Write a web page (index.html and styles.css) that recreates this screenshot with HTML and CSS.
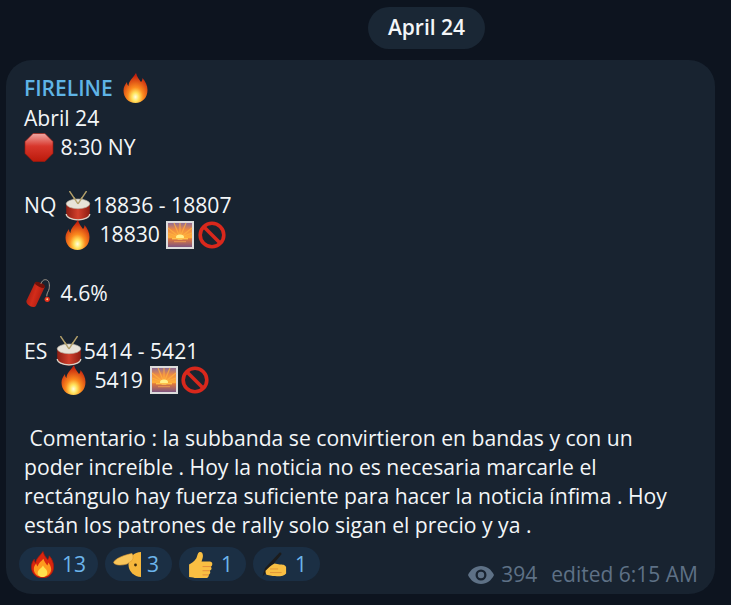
FILE: index.html
```html
<!DOCTYPE html>
<html lang="es">
<head>
<meta charset="utf-8">
<title>FIRELINE</title>
<link rel="stylesheet" href="styles.css">
</head>
<body>
<svg class="defs" width="0" height="0" aria-hidden="true">
  <defs>
    <radialGradient id="flameOuter" cx="50%" cy="80%" r="72%">
      <stop offset="0" stop-color="#fffde0"/>
      <stop offset=".2" stop-color="#ffe45e"/>
      <stop offset=".45" stop-color="#fb8a1e"/>
      <stop offset="1" stop-color="#c41f0e"/>
    </radialGradient>
    <linearGradient id="stopFill" x1="0" y1="0" x2="0" y2="1">
      <stop offset="0" stop-color="#f0a8a4"/>
      <stop offset=".45" stop-color="#d8372c"/>
      <stop offset="1" stop-color="#bb1a0b"/>
    </linearGradient>
    <linearGradient id="drumBody" x1="0" y1="0" x2="1" y2="0">
      <stop offset="0" stop-color="#8e1d12"/>
      <stop offset=".5" stop-color="#d2402c"/>
      <stop offset="1" stop-color="#8e1d12"/>
    </linearGradient>
    <linearGradient id="sky" x1="0" y1="0" x2="0" y2="1">
      <stop offset="0" stop-color="#8f6c96"/>
      <stop offset=".28" stop-color="#ee8a42"/>
      <stop offset=".6" stop-color="#ffae38"/>
      <stop offset=".66" stop-color="#e0783c"/>
      <stop offset="1" stop-color="#7e5580"/>
    </linearGradient>
    <linearGradient id="stick" x1="0" y1="0" x2="1" y2=".45">
      <stop offset="0" stop-color="#8f150c"/>
      <stop offset=".55" stop-color="#d42c1a"/>
      <stop offset="1" stop-color="#a81a10"/>
    </linearGradient>
    <symbol id="fire" viewBox="0 0 24 30">
      <path fill="url(#flameOuter)" d="M12.500 0c1 4 3 6 5 9 1-1 1.500-2.500 1.500-4 3 3.500 5 7.500 5 12 0 7.500-5 13-12 13S0 24.500 0 17.500c0-3.500 1.500-6 3.500-8.500 0 2 .5 3 1.500 4C5 8 9.500 5 12.500 0z"/>
    </symbol>
    <symbol id="fire-flat" viewBox="0 0 24 28">
      <path fill="#d8260f" stroke="#a81a0a" stroke-width=".8" d="M12.500.5c1 4 3 6 5 8.500 1-1 1.500-2.500 1.500-4 3 3.500 4.500 7 4.500 11.500 0 6.500-5 11.500-11.500 11.500S.5 23 .5 16.500c0-3.500 1.500-6 3-8 0 2 .5 3 1.500 4C5 8 9.500 5 12.500.5z"/>
      <path fill="#ff9a1e" d="M13 8c1 3 2 4.500 4 7 .5-1 1-2 1-3 2 2.500 3 5 3 7 0 4.500-4 8-9 8s-9-3.500-9-8c0-2.500 1-4.500 2.500-6 .3 1.500.8 2 1.500 3C8 12 11 10.500 13 8z"/>
      <path fill="#ffe14d" d="M12.500 15c1 2.500 4.500 4 4.500 7.500 0 2.500-2.200 4.500-5 4.500s-5-2-5-4.500c0-3 4-4.500 5.500-7.500z"/>
    </symbol>
    <symbol id="stop" viewBox="0 0 28 28">
      <path fill="url(#stopFill)" stroke="#a5180c" stroke-width=".6" d="M8.300.5h11.400l7.800 7.800v11.400l-7.800 7.800H8.300L.5 19.700V8.300z"/>
    </symbol>
    <symbol id="drum" viewBox="0 0 24 28">
      <path stroke="#b3a06a" stroke-width="1.300" fill="none" d="M4 0l8 12M20 0l-8 12"/>
      <path fill="url(#drumBody)" d="M1 12v10c0 3 5 5.500 11 5.500S23 25 23 22V12z"/>
      <path fill="none" stroke="#d9d4c8" stroke-width="1.200" d="M1 21.500c0 3 5 5.500 11 5.500s11-2.500 11-5.500"/>
      <ellipse cx="12" cy="12" rx="11" ry="4.500" fill="#e8e3d8" stroke="#b8b2a4" stroke-width=".6"/>
      <path stroke="#b3a06a" stroke-width="1.300" fill="none" d="M8 6l4 6M16 6l-4 6"/>
    </symbol>
    <symbol id="sunrise" viewBox="0 0 28 28">
      <rect width="28" height="28" fill="#dcdcdc"/>
      <rect x="2" y="2" width="24" height="24" fill="url(#sky)"/>
      <path stroke="#ffb040" stroke-width="1.200" opacity=".8" d="M14 16.500L2 7M14 16.500L8 2M14 16.500V2M14 16.500L20 2M14 16.500L26 7M14 16.500L2 12M14 16.500L26 12"/>
      <ellipse cx="14" cy="16" rx="4" ry="2.600" fill="#fff08a"/>
      <rect x="6" y="17" width="16" height="1.400" fill="#ffc04a"/>
      <rect x="8" y="20" width="12" height="1.200" fill="#f0a050" opacity=".7"/>
    </symbol>
    <symbol id="prohibit" viewBox="0 0 28 28">
      <circle cx="14" cy="14" r="11.800" fill="#1a2530" stroke="#d9281c" stroke-width="3.600"/>
      <path stroke="#d9281c" stroke-width="3.600" d="M6 6l16 16"/>
    </symbol>
    <symbol id="dynamite" viewBox="0 0 30 30">
      <path fill="url(#stick)" d="M11 3.600L21 8.400 12 27.400c-1 2-4 1.800-6 .8s-4.500-3-4-5.600z"/>
      <ellipse cx="16" cy="6" rx="5.600" ry="2.200" transform="rotate(25 16 6)" fill="#6f1109"/>
      <path fill="none" stroke="#a89e90" stroke-width="1" d="M17 5c1-3 3-5 6-4s3 6 2.500 9-2.500 4-2.500 8"/>
      <circle cx="23.500" cy="21" r="2.700" fill="#e6301d"/>
      <circle cx="23.500" cy="21" r="1" fill="#ffd98a"/>
    </symbol>
    <symbol id="point" viewBox="0 0 28 25">
      <path fill="#f6b73c" d="M28 0a12.500 12.500 0 0 0 0 25z"/>
      <path fill="#f8c55a" stroke="#dd9a33" stroke-width=".6" d="M1 9.500C5 5 12 3 19 1.500c1.500 2 1.500 5 0 7l-5 3.500c-5 1.500-10 1.500-12.500-.3-1-.6-1-1.500-.5-2.200z"/>
      <circle cx="22.500" cy="13" r="1.400" fill="#3b2a0e"/>
    </symbol>
    <symbol id="thumb" viewBox="0 0 24 26">
      <path fill="#f9bf43" d="M1 13c2-1 5-3 7-6 1-2 1-5 3-6 3-1 4 3 3 6l-1 3h8c3 0 3 4 1 5 1 2 1 3-1 4 1 2 0 3-1 4 0 2-1 3-3 3H8c-2 0-4-1-7-1z"/>
      <path fill="none" stroke="#e0893a" stroke-width=".9" d="M14 15h8M14 19h7M14 23h6"/>
    </symbol>
    <symbol id="write" viewBox="0 0 28 28">
      <path fill="#1c1c1c" d="M19.500.8c1-.6 2-.1 2.300.9.100.5 0 .9-.4 1.400L7 20.500l-6.500 7 3-9.500z"/>
      <path fill="#f9bf43" d="M4 21c3-3 6-6 10-8l6 1c3 0 6 0 7 3v7c-2 3-7 3.500-15 3l-7-1.500c-1-2-1-3-1-4.500z"/>
      <path fill="none" stroke="#dc8d36" stroke-width=".9" d="M9 19h9M9 23h13"/>
    </symbol>
    <symbol id="eye" viewBox="0 0 26 18">
      <path fill="#5e7186" fill-rule="evenodd" d="M13 0C7 0 2.500 3.800 0 9c2.500 5.200 7 9 13 9s10.500-3.800 13-9C23.500 3.800 19 0 13 0zm0 14.500A5.500 5.500 0 1 1 13 3.500a5.500 5.500 0 0 1 0 11zm0-8.700a3.200 3.200 0 1 0 0 6.400 3.200 3.200 0 0 0 0-6.400z"/>
    </symbol>
  </defs>
</svg>

<main class="chat">
  <div class="date-row"><span class="date-pill">April 24</span></div>
  <article class="bubble">
    <div class="line author">FIRELINE <svg class="emoji fire-lg"><use href="#fire"/></svg></div>
    <div class="line">Abril 24</div>
    <div class="line"><svg class="emoji stop-icon"><use href="#stop"/></svg> 8:30 NY</div>
    <div class="line"></div>
    <div class="line">NQ <svg class="emoji drum-icon"><use href="#drum"/></svg>18836 - 18807</div>
    <div class="line indent-a"><svg class="emoji fire-lg"><use href="#fire"/></svg> 18830 <svg class="emoji sq sunrise"><use href="#sunrise"/></svg><svg class="emoji sq"><use href="#prohibit"/></svg></div>
    <div class="line"></div>
    <div class="line"><svg class="emoji stop-icon"><use href="#dynamite"/></svg> 4.6%</div>
    <div class="line"></div>
    <div class="line">ES <svg class="emoji drum-icon"><use href="#drum"/></svg>5414 - 5421</div>
    <div class="line indent-b"><svg class="emoji fire-lg"><use href="#fire"/></svg> 5419 <svg class="emoji sq sunrise"><use href="#sunrise"/></svg><svg class="emoji sq"><use href="#prohibit"/></svg></div>
    <div class="line"></div>
    <p class="comment">&nbsp;Comentario : la subbanda se convirtieron en bandas y con un poder increíble . Hoy la noticia no es necesaria marcarle el rectángulo hay fuerza suficiente para hacer la noticia ínfima . Hoy están los patrones de rally solo sigan el precio y ya .</p>
    <footer class="footer">
      <div class="reactions">
        <span class="reaction wide"><svg class="r-icon"><use href="#fire-flat"/></svg>13</span>
        <span class="reaction point"><svg class="r-icon"><use href="#point"/></svg>3</span>
        <span class="reaction"><svg class="r-icon"><use href="#thumb"/></svg>1</span>
        <span class="reaction"><svg class="r-icon"><use href="#write"/></svg>1</span>
      </div>
      <div class="meta">
        <svg class="eye"><use href="#eye"/></svg>
        <span class="views">394</span>
        <span>edited 6:15 AM</span>
      </div>
    </footer>
  </article>
</main>
</body>
</html>
```
FILE: styles.css
```css
* { box-sizing: border-box; }
html, body { margin: 0; height: 100%; }
body {
  background: #0d141f;
  font-family: "Open Sans", sans-serif;
  font-size: 21.15px;
  color: #f3f6f8;
  overflow: hidden;
}
.defs { position: absolute; }
.chat { padding: 7px 16px 0 6px; }
.date-row { display: flex; justify-content: center; margin-left: 132px; height: 53px; }
.date-pill {
  height: 42px;
  padding: 0 20px;
  border-radius: 21px;
  background: #1a2735;
  font-size: 21px;
  font-weight: 600;
  line-height: 41px;
}
.bubble {
  display: flex;
  flex-direction: column;
  height: 534px;
  padding: 14px 17px 13px 18px;
  border-radius: 26px;
  background: #182330;
}
.line { height: 29.1px; line-height: 29.1px; white-space: pre; }
.author { color: #5fb4e6; font-weight: 600; font-size: 21px; }
.indent-a { padding-left: 41px; }
.indent-b { padding-left: 37px; }
.emoji { vertical-align: middle; position: relative; top: -2px; }
.fire-lg { width: 25px; height: 30px; margin-right: 4px; }
.author .fire-lg { margin-left: 5px; margin-right: 0; }
.indent-b .fire-lg { margin-right: 3px; }
.indent-a .sunrise { margin-left: 1px; margin-right: 4px; }
.indent-b .sunrise { margin-left: 2px; }
.stop-icon { width: 30px; height: 29px; margin-right: 1px; }
.drum-icon { width: 26px; height: 30px; margin-left: 3px; margin-right: 2px; }
.sq { width: 28px; height: 28px; margin-right: 3px; }
.comment { margin: 0; line-height: 29.1px; max-width: 650px; }
.footer {
  display: flex;
  justify-content: space-between;
  align-items: flex-end;
  margin-top: auto;
  margin-left: -5px;
}
.reactions { display: flex; gap: 7px; }
.reaction {
  display: flex;
  align-items: center;
  gap: 8px;
  width: 67px;
  height: 34px;
  padding-left: 9px;
  border-radius: 17px;
  background: #1b2f44;
  color: #6cb5ec;
  font-size: 21px;
}
.reaction.wide { width: 79px; padding-left: 11px; gap: 7px; }
.reaction.point { padding-left: 8px; gap: 6px; }
.r-icon { width: 25px; height: 27px; flex: none; }
.point .r-icon { width: 28px; }
.meta {
  display: flex;
  align-items: center;
  color: #5e7186;
  font-size: 21px;
  line-height: 27px;
  margin-bottom: -7px;
}
.eye { width: 26px; height: 18px; margin-right: 7px; }
.views { margin-right: 14px; }
```
